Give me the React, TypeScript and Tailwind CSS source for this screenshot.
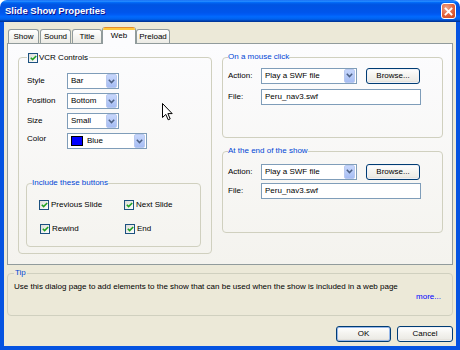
import React from "react";

// XP-style "Slide Show Properties" dialog, Web tab

function Chevron() {
  return (
    <svg width="7" height="5" viewBox="0 0 7 5">
      <path d="M0.8 0.8 L3.5 3.6 L6.2 0.8" stroke="#4d6185" strokeWidth="1.5" fill="none" />
    </svg>
  );
}

function Select({ width, children }: { width: string; children: React.ReactNode }) {
  return (
    <div className={`${width} h-[16px] flex items-center border border-[#7f9db9] bg-white`}>
      <div className="flex-1 flex items-center pl-[3px] leading-[10px]">{children}</div>
      <div className="w-[11px] h-[14px] mr-[1px] rounded-[2px] border border-[#b9c9ef] bg-[linear-gradient(to_bottom,#c6d6fc,#b4c8f6_60%,#a6bdf4)] flex items-center justify-center">
        <Chevron />
      </div>
    </div>
  );
}

function CheckBox() {
  return (
    <div className="w-[10px] h-[10px] border border-[#1c5180] bg-[linear-gradient(135deg,#dcdcd7,#ffffff)] flex items-center justify-center shrink-0">
      <svg width="7" height="6" viewBox="0 0 7 6">
        <path d="M0.8 2.8 L2.6 4.6 L6.2 1" stroke="#21a121" strokeWidth="1.6" fill="none" />
      </svg>
    </div>
  );
}

function XpButton({ label, width, isDefault }: { label: string; width: string; isDefault?: boolean }) {
  return (
    <div
      className={`${width} h-[16px] flex items-center justify-center rounded-[3px] border border-[#003c74] bg-[linear-gradient(to_bottom,#ffffff,#f3f2ee_50%,#ecebe6_85%,#d6d0c5)] leading-[10px] ${
        isDefault ? "shadow-[inset_0_0_0_1px_#98b8ea]" : "shadow-[inset_0_0_0_1px_#eef0f6]"
      }`}
    >
      {label}
    </div>
  );
}

function Tab({ label, width, active }: { label: string; width: string; active?: boolean }) {
  if (active) {
    return (
      <div
        className={`${width} h-[17px] flex flex-col rounded-t-[3px] border-x border-[#919b9c] bg-[#fcfcfe] overflow-hidden`}
      >
        <div className="h-[1px] bg-[#e68b2c]" />
        <div className="h-[2px] bg-[#ffc83c]" />
        <div className="flex-1 flex items-center justify-center leading-[10px] pb-[2px]">{label}</div>
      </div>
    );
  }
  return (
    <div
      className={`${width} h-[14px] mb-[1px] flex items-center justify-center rounded-t-[3px] border border-b-0 border-[#919b9c] bg-[linear-gradient(to_bottom,#ffffff,#f3f3ef_60%,#ecebe5)] leading-[10px]`}
    >
      {label}
    </div>
  );
}

function ActionGroup({ title, height, pad, gap }: { title: string; height: string; pad: string; gap: string }) {
  return (
    <fieldset className={`w-[221px] ${height} border border-[#d0d0bf] rounded-[4px] px-[5px]`}>
      <legend className="h-[10px] leading-[10px] text-[#0046d5]">{title}</legend>
      <div className={`${pad} flex items-center h-[17px]`}>
        <div className="w-[33px] leading-[10px]">Action:</div>
        <Select width="w-[96px]">Play a SWF file</Select>
        <div className="ml-[9px]">
          <XpButton label="Browse..." width="w-[54px]" />
        </div>
      </div>
      <div className={`${gap} flex items-center h-[16px]`}>
        <div className="w-[33px] leading-[10px]">File:</div>
        <div className="w-[160px] h-[16px] border border-[#7f9db9] bg-white flex items-center pl-[3px] leading-[10px]">
          Peru_nav3.swf
        </div>
      </div>
    </fieldset>
  );
}

export default function App() {
  return (
    <div className="w-[460px] h-[350px] flex flex-col font-['Liberation_Sans',Arial,sans-serif] text-[8px] text-black select-none">
      {/* title bar */}
      <div className="h-[22px] shrink-0 rounded-t-[7px] flex items-center justify-between pl-[5px] pr-[4px] bg-[linear-gradient(to_bottom,#0058ee_0%,#3593ff_4%,#288eff_6%,#127dff_8%,#036ffc_10%,#0262ee_14%,#0057e5_20%,#0054e3_24%,#0055eb_56%,#005bf5_66%,#026afe_76%,#0062ef_86%,#0052d6_92%,#0040ab_94%,#003092_100%)]">
        <span className="text-white font-bold text-[9.5px] leading-[12px] [text-shadow:1px_1px_0_#0f1089]">
          Slide Show Properties
        </span>
        <div className="w-[15px] h-[16px] rounded-[3px] border border-white bg-[radial-gradient(circle_at_35%_30%,#f0a58a,#e0623c_55%,#c8421a)] flex items-center justify-center">
          <svg width="9" height="9" viewBox="0 0 9 9">
            <path d="M1.5 1.5 L7.5 7.5 M7.5 1.5 L1.5 7.5" stroke="#ffffff" strokeWidth="1.8" strokeLinecap="square" />
          </svg>
        </div>
      </div>

      {/* window body */}
      <div className="flex-1 flex flex-col bg-[#ece9d8] border-x-4 border-b-4 border-[#0553e1] pl-[3px] pr-[3px] pt-[5px]">
        {/* tabs */}
        <div className="flex items-end h-[17px] pl-[1px] relative z-10">
          <Tab label="Show" width="w-[31px]" />
          <div className="w-[1px]" />
          <Tab label="Sound" width="w-[31px]" />
          <div className="w-[1px]" />
          <Tab label="Title" width="w-[30px]" />
          <Tab label="Web" width="w-[34px]" active />
          <Tab label="Preload" width="w-[34px]" />
        </div>

        {/* tab panel */}
        <div className="relative -mt-[1px] w-[446px] h-[222px] border border-[#919b9c] bg-[linear-gradient(to_bottom,#fcfcfe,#f4f3ee)] flex pl-[10px] pt-[8px]">
          <fieldset className="w-[194px] h-[202px] border border-[#d0d0bf] rounded-[4px] px-[8px]">
            <legend className="h-[11px] flex items-center gap-[1px] px-[1px] leading-[10px]">
              <CheckBox />
              <span>VCR Controls</span>
            </legend>
            <div className="pt-[10px] flex flex-col gap-[4px]">
              <div className="flex items-center h-[16px]">
                <div className="w-[40px] leading-[10px]">Style</div>
                <Select width="w-[52px]">Bar</Select>
              </div>
              <div className="flex items-center h-[16px]">
                <div className="w-[40px] leading-[10px]">Position</div>
                <Select width="w-[52px]">Bottom</Select>
              </div>
              <div className="flex items-center h-[16px]">
                <div className="w-[40px] leading-[10px]">Size</div>
                <Select width="w-[52px]">Small</Select>
              </div>
              <div className="flex items-center h-[16px]">
                <div className="w-[40px] leading-[10px] -mt-[4px]">Color</div>
                <Select width="w-[80px]">
                  <div className="w-[12px] h-[10px] border border-black bg-[#0000ff]" />
                  <span className="ml-[4px]">Blue</span>
                </Select>
              </div>
            </div>

            <fieldset className="mt-[29px] -ml-[1px] w-[175px] h-[69px] border border-[#d0d0bf] rounded-[4px] px-[5px]">
              <legend className="h-[10px] leading-[10px] text-[#0046d5]">Include these buttons</legend>
              <div className="pl-[7px] pt-[12px] grid grid-cols-[85px_1fr] gap-y-[14px]">
                <div className="flex items-center gap-[2px] h-[10px] leading-[10px]">
                  <CheckBox />
                  <span>Previous Slide</span>
                </div>
                <div className="flex items-center gap-[2px] h-[10px] leading-[10px]">
                  <CheckBox />
                  <span>Next Slide</span>
                </div>
                <div className="flex items-center gap-[2px] h-[10px] leading-[10px] pl-[1px]">
                  <CheckBox />
                  <span>Rewind</span>
                </div>
                <div className="flex items-center gap-[2px] h-[10px] leading-[10px] pl-[1px]">
                  <CheckBox />
                  <span>End</span>
                </div>
              </div>
            </fieldset>
          </fieldset>

          <div className="ml-[10px] flex flex-col">
            <ActionGroup title="On a mouse click" height="h-[86px]" pad="mt-[5px]" gap="mt-[5px]" />
            <div className="mt-[8px]">
              <ActionGroup title="At the end of the show" height="h-[87px]" pad="mt-[7px]" gap="mt-[3px]" />
            </div>
          </div>

          {/* mouse pointer */}
          <svg className="absolute left-[154px] top-[59px]" width="11" height="18" viewBox="0 0 11 18">
            <path
              d="M0.5 0.5 L0.5 14.5 L3.8 11.4 L6.2 16.8 L8.2 15.9 L5.9 10.6 L10.2 10.6 Z"
              fill="#ffffff"
              stroke="#000000"
              strokeWidth="1"
              strokeLinejoin="miter"
            />
          </svg>
        </div>

        {/* tip */}
        <fieldset className="mt-[3px] w-[446px] h-[48px] border border-[#d0d0bf] rounded-[4px] px-[6px] flex flex-col">
          <legend className="h-[10px] leading-[10px] text-[#0046d5] px-[1px]">Tip</legend>
          <div className="mt-[4px] leading-[10px]">
            Use this dialog page to add elements to the show that can be used when the show is included in a web page
          </div>
          <div className="mt-auto mb-[1px] mr-[5px] self-end leading-[10px] text-[#0000ff]">more...</div>
        </fieldset>

        {/* buttons */}
        <div className="mt-[10px] flex justify-end gap-[6px]">
          <XpButton label="OK" width="w-[55px]" isDefault />
          <XpButton label="Cancel" width="w-[56px]" />
        </div>
      </div>
    </div>
  );
}
